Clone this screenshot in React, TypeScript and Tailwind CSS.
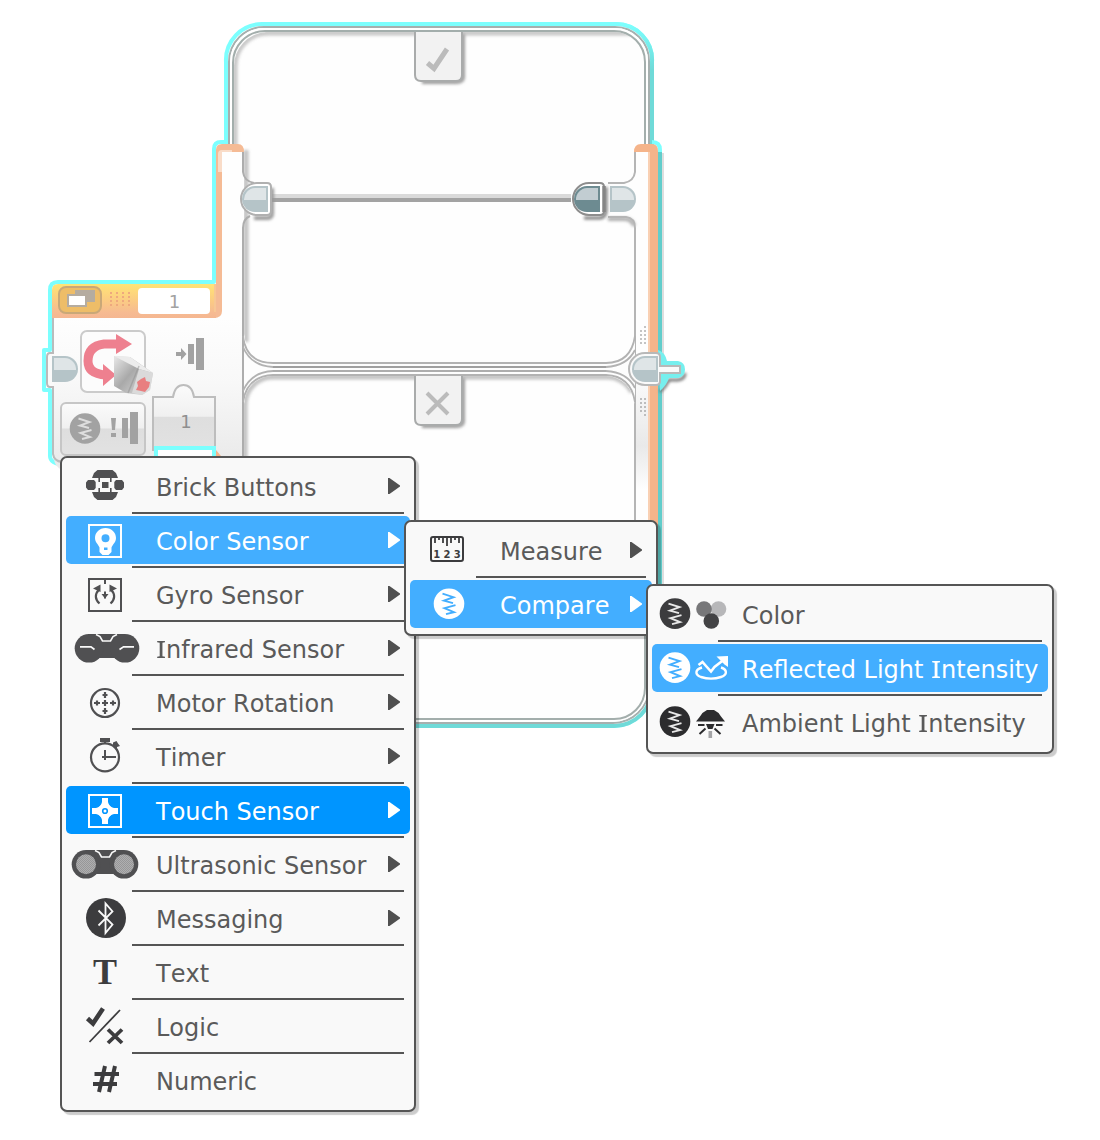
import React from "react";

type Tone = "none" | "light" | "strong";

interface Item {
  label: string;
  icon: React.ReactNode;
  arrow?: boolean;
  tone?: Tone;
}

const DARK = "#505052";
const INK = "#3c3c3e";

/* ---------- menu icons (each drawn in the icon column of a 48px row) ---------- */

function Cell({ children, w = 78 }: { children: React.ReactNode; w?: number }) {
  return (
    <svg width={w} height={48} viewBox={`0 0 ${w} 48`} className="block shrink-0" fill="none">
      {children}
    </svg>
  );
}

const BrickIcon = () => (
  <Cell>
    <path d="M31.500 8h15l3.500 3 2 5H26l2-5zM26 30h26l-2 5-3.500 3h-15L28 35z" fill={DARK} />
    <path d="M22 18h6l1.700 2v6L28 28h-6l-2-2.500v-5zM56 18h-6l-1.700 2v6l1.700 2h6l2-2.500v-5z" fill={DARK} />
    <path d="M36 20h6.500v6H36z" fill={DARK} />
    <path d="M33.200 15v5M33.200 26v5M44.800 15v5M44.800 26v5" stroke={DARK} strokeWidth="1.600" />
  </Cell>
);

const ColorSensorIcon = () => (
  <Cell>
    <rect x="23" y="9" width="32" height="32" stroke="#fff" strokeWidth="2" />
    <path
      fillRule="evenodd"
      fill="#fff"
      d="M39.500 12c6 0 10.500 4.500 10.500 10 0 4.500-3.500 6.500-4.500 9.500v4.500l-3 3h-6l-3-3v-4.500C32.500 28.500 29 26.500 29 22c0-5.500 4.500-10 10.500-10zM39.500 18.200a4 4 0 1 0 0 8 4 4 0 0 0 0-8zM38 31.500h3.500v2.500H38z"
    />
  </Cell>
);

const GyroIcon = () => (
  <Cell>
    <rect x="23" y="9" width="32" height="32" stroke={DARK} strokeWidth="2" />
    <path d="M39 9v5M39 21.500v7" stroke={DARK} strokeWidth="2" />
    <path d="M35.500 24h7L39 28.500z" fill={DARK} />
    <path d="M33.500 33.500c-4.500-4-5-9-.5-14M44.500 33.500c4.500-4 5-9 .5-14" stroke={DARK} strokeWidth="2.200" />
    <path d="M27 18.500l7.500-4V22zM51 18.500l-7.500-4V22z" fill={DARK} />
  </Cell>
);

const InfraredIcon = () => (
  <Cell>
    <path d="M22 10h37v22l-8 2H31l-9-2z" fill={DARK} />
    <circle cx="23" cy="24.300" r="14.300" fill={DARK} />
    <circle cx="59" cy="24.300" r="14.300" fill={DARK} />
    <path d="M30 10.500l4 2 2.500 4.500h8l2.500-4.500 4-2" stroke="#f9f9f9" strokeWidth="1.600" />
    <path d="M14 22.800h11l3.500 2.700M68 22.800H57.500L53.500 25.500" stroke="#f9f9f9" strokeWidth="1.700" />
  </Cell>
);

const MotorIcon = () => (
  <Cell>
    <circle cx="39" cy="25" r="14" stroke={DARK} strokeWidth="2.200" />
    <path
      d="M39 14v6M36.500 17h5M39 30v6M36.500 33h5M39 22v6M36 25h6M31 22.500v5M28 25h6M47 22.500v5M44 25h6"
      stroke={DARK}
      strokeWidth="2.200"
    />
  </Cell>
);

const TimerIcon = () => (
  <Cell>
    <circle cx="39" cy="25.300" r="14" stroke={DARK} strokeWidth="2.200" />
    <path d="M34 6h10v4H34zM47 10.500l3.500-1.500 1.500 2.500 2 2.500-3 1v3l-4-4z" fill={DARK} />
    <path d="M39 9v3M39 18v10M36 25h14" stroke={DARK} strokeWidth="2" />
  </Cell>
);

const TouchIcon = () => (
  <Cell>
    <rect x="23" y="9" width="32" height="32" stroke="#fff" strokeWidth="2" />
    <path d="M36 12h6v4q1 5 6 6h4v6h-4q-5 1-6 6v4h-6v-4q-1-5-6-6h-4v-6h4q5-1 6-6z" fill="#fff" />
    <path d="M32 18h14v14H32z" fill="#fff" transform="rotate(45 39 25)" />
    <circle cx="39" cy="25" r="2.300" stroke="#0095ff" strokeWidth="1.600" />
  </Cell>
);

const UltrasonicIcon = () => (
  <Cell>
    <defs>
      <pattern id="mesh" width="2" height="2" patternUnits="userSpaceOnUse">
        <rect width="2" height="2" fill="#afafb0" />
        <path d="M0 0h1v1H0zM1 1h1v1H1z" fill="#979798" />
      </pattern>
    </defs>
    <path d="M20 10h38v24H20z" fill={DARK} />
    <circle cx="20" cy="24.300" r="14.300" fill={DARK} />
    <circle cx="58" cy="24.300" r="14.300" fill={DARK} />
    <circle cx="20" cy="24.300" r="10" fill="url(#mesh)" />
    <circle cx="58" cy="24.300" r="10" fill="url(#mesh)" />
    <path d="M29 10.500l4 2 2.500 4.500h8l2.500-4.500 4-2" stroke="#f9f9f9" strokeWidth="1.600" />
  </Cell>
);

const BluetoothIcon = () => (
  <Cell>
    <circle cx="40" cy="24" r="20" fill={INK} />
    <path d="M32.500 16.500L46.500 30.500 39.500 39V9.500L46.500 17.500 32.500 31.500" stroke="#f9f9f9" strokeWidth="1.800" />
  </Cell>
);

const LetterIcon = () => (
  <span className="block w-[78px] shrink-0 text-center font-['Liberation_Serif',serif] text-[36px] leading-[48px] font-bold text-[#3c3c3e]">
    T
  </span>
);

const LogicIcon = () => (
  <Cell>
    <path d="M21.500 16.500l5.500 5L37 6.500" stroke={INK} strokeWidth="4.600" />
    <path d="M23.500 40L54 8" stroke={INK} strokeWidth="1.800" />
    <path d="M42 27.500l14 13.500M56 27.500L42 41" stroke={INK} strokeWidth="3.800" />
  </Cell>
);

const HashIcon = () => (
  <Cell>
    <path d="M28.500 18H53M27 28h24" stroke={INK} strokeWidth="4" />
    <path d="M39 10L33 36M49 10L43 36" stroke={INK} strokeWidth="4" />
  </Cell>
);

const MeasureIcon = () => (
  <Cell>
    <rect x="21" y="11" width="32" height="24" rx="2" stroke={INK} strokeWidth="2" />
    <path d="M25 11v6M29 11v3M33 11v6M37 11v9M41 11v6M45 11v3M49 11v6" stroke={INK} strokeWidth="1.800" />
    <text x="38.700" y="32" textAnchor="middle" fontFamily="DejaVu Sans" fontWeight="700" fontSize="10" letterSpacing="3.400" fill={INK}>
      123
    </text>
  </Cell>
);

function Badge({ x, y, disc, line }: { x: number; y: number; disc: string; line: string }) {
  return (
    <g transform={`translate(${x} ${y})`}>
      <circle r="15.300" fill={disc} />
      <path d="M-6.500-10L4.500-6.500-5-3 4-.5M6.500 1.500L-4.500 4.500 5 8.500-3 10.500" stroke={line} strokeWidth="1.900" fill="none" />
    </g>
  );
}

const CompareIcon = () => (
  <Cell>
    <Badge x={39} y={23.700} disc="#fff" line="#43aeff" />
  </Cell>
);

const CompareColorIcon = () => (
  <Cell w={89}>
    <Badge x={23} y={23.600} disc="#3c3c3e" line="#e8e8e8" />
    <circle cx="66.500" cy="19" r="7.800" fill="#b7b7b9" />
    <circle cx="52" cy="19" r="7.800" fill="#777779" />
    <circle cx="59.300" cy="31" r="7.800" fill="#434345" />
  </Cell>
);

const CompareReflectedIcon = () => (
  <Cell w={89}>
    <Badge x={23} y={23.600} disc="#fff" line="#43aeff" />
    <path
      d="M50 23.500c-7 2-7.500 7-1 9.500 6 2 14 2 20 0 7-2.500 6-7.500 0-9.500"
      stroke="#fff"
      strokeWidth="2.400"
    />
    <path d="M46.500 21l4-3 3.500 4 5 5.500 3.500-4.500L71.500 16" stroke="#fff" strokeWidth="2.600" />
    <path d="M64.500 12.500L76 12v11l-3.500-2.500-4.500-4.500z" fill="#fff" />
  </Cell>
);

const CompareAmbientIcon = () => (
  <Cell w={89}>
    <Badge x={23} y={23.600} disc="#2c2c2e" line="#e8e8e8" />
    <path d="M44 23.500l4-5q2.500-4.500 7-6.500h7q4.500 2 7 6.500l4 5z" fill="#2c2c2e" />
    <path d="M46 27h6.500M64 27h6.500M53.500 30.500l-6 5.500M62.500 30.500l6 5.500" stroke="#2c2c2e" strokeWidth="2" />
    <path d="M54 26h8.500l-2 5h-4.500z" fill="#2c2c2e" />
    <path d="M58.300 33v7" stroke="#a5a5a7" strokeWidth="3.600" />
  </Cell>
);

/* ---------- menus ---------- */

function Label({ text }: { text: string }) {
  return (
    <>
      {text.split(/(I)/).map((part, i) =>
        part === "I" ? (
          <span key={i} className="inline-block w-[10px] scale-x-125 text-center font-['Noto_Sans',sans-serif] leading-none">
            I
          </span>
        ) : (
          <React.Fragment key={i}>{part}</React.Fragment>
        ),
      )}
    </>
  );
}

const tones: Record<Tone, string> = {
  none: "text-[#5a5a5a]",
  light: "bg-[#43aeff] text-white",
  strong: "bg-[#0095ff] text-white",
};

function Menu({ items, place, gap }: { items: Item[]; place: string; gap: string }) {
  return (
    <ul
      className={`absolute rounded-[7px] border-2 border-[#555555] bg-[#f9f9f9] px-1 pt-1 pb-1.5 shadow-[3px_3px_1px_0px_rgba(0,0,0,0.2)] ${place}`}
    >
      {items.map((item, i) => (
        <li key={item.label}>
          {i > 0 && <div className="my-0.5 mr-1.5 ml-[66px] h-0.5 bg-[#555555]" />}
          <div className={`flex h-12 items-center rounded-[5px] ${tones[item.tone ?? "none"]}`}>
            {item.icon}
            <span
              className={`h-12 flex-1 pt-[2px] text-2xl leading-[48px] whitespace-nowrap [font-kerning:none] ${gap}`}
            >
              <Label text={item.label} />
            </span>
            {item.arrow && (
              <svg width="12" height="16" viewBox="0 0 12 16" className="mr-[10px] shrink-0 text-[#505050]">
                <path d="M0 0h1.500L12 7.500v1L1.500 16H0z" fill={item.tone ? "#ffffff" : "currentColor"} />
              </svg>
            )}
          </div>
        </li>
      ))}
    </ul>
  );
}

const sensors: Item[] = [
  { label: "Brick Buttons", icon: <BrickIcon />, arrow: true },
  { label: "Color Sensor", icon: <ColorSensorIcon />, arrow: true, tone: "light" },
  { label: "Gyro Sensor", icon: <GyroIcon />, arrow: true },
  { label: "Infrared Sensor", icon: <InfraredIcon />, arrow: true },
  { label: "Motor Rotation", icon: <MotorIcon />, arrow: true },
  { label: "Timer", icon: <TimerIcon />, arrow: true },
  { label: "Touch Sensor", icon: <TouchIcon />, arrow: true, tone: "strong" },
  { label: "Ultrasonic Sensor", icon: <UltrasonicIcon />, arrow: true },
  { label: "Messaging", icon: <BluetoothIcon />, arrow: true },
  { label: "Text", icon: <LetterIcon /> },
  { label: "Logic", icon: <LogicIcon /> },
  { label: "Numeric", icon: <HashIcon /> },
];

const modes: Item[] = [
  { label: "Measure", icon: <MeasureIcon />, arrow: true },
  { label: "Compare", icon: <CompareIcon />, arrow: true, tone: "light" },
];

const comparisons: Item[] = [
  { label: "Color", icon: <CompareColorIcon /> },
  { label: "Reflected Light Intensity", icon: <CompareReflectedIcon />, tone: "light" },
  { label: "Ambient Light Intensity", icon: <CompareAmbientIcon /> },
];

/* ---------- switch block drawing ---------- */

/* D-shaped sequence plug, 26x26, flat edge on the right. */
function Plug({ x, y, flip, top, bottom }: { x: number; y: number; flip?: boolean; top: string; bottom: string }) {
  return (
    <g transform={flip ? `translate(${x + 26} ${y}) scale(-1 1)` : `translate(${x} ${y})`}>
      <path d="M26 0H13A13 13 0 0 0 13 26H26z" fill={bottom} />
      <path d="M24 2H13A11.500 11.500 0 0 0 2 14H24z" fill={top} />
    </g>
  );
}

function Dots({ cols, rows, fill }: { cols: number[]; rows: number[]; fill: string }) {
  return (
    <g fill={fill}>
      {rows.map((y) => cols.map((x) => <rect key={`${x}-${y}`} x={x} y={y} width="2" height="2" />))}
    </g>
  );
}

function SwitchBlock() {
  const pane = "M228 170V62A34 34 0 0 1 262 26H616A34 34 0 0 1 650 62V688A36 36 0 0 1 614 724H264A36 36 0 0 1 228 688z";
  return (
    <svg width="1100" height="1140" viewBox="0 0 1100 1140" className="block" fill="none">
      <defs>
        <linearGradient id="head" x1="0" y1="284" x2="0" y2="318" gradientUnits="userSpaceOnUse">
          <stop offset="0" stopColor="#ffe477" />
          <stop offset="0.350" stopColor="#fdd27e" />
          <stop offset="0.850" stopColor="#f6ba92" />
          <stop offset="1" stopColor="#f5b791" />
        </linearGradient>
        <linearGradient id="body" x1="0" y1="318" x2="0" y2="462" gradientUnits="userSpaceOnUse">
          <stop offset="0" stopColor="#fefefe" />
          <stop offset="0.450" stopColor="#f8f8f8" />
          <stop offset="1" stopColor="#eaeaea" />
        </linearGradient>
        <linearGradient id="key" x1="0" y1="0" x2="0" y2="1">
          <stop offset="0" stopColor="#fbfbfb" />
          <stop offset="0.480" stopColor="#f0f0f0" />
          <stop offset="0.500" stopColor="#dedede" />
          <stop offset="1" stopColor="#e2e2e2" />
        </linearGradient>
        <linearGradient id="rail" x1="0" y1="380" x2="0" y2="490" gradientUnits="userSpaceOnUse">
          <stop offset="0" stopColor="#fafafa" />
          <stop offset="0.600" stopColor="#e9e9e9" />
          <stop offset="1" stopColor="#fefefe" />
        </linearGradient>
        <linearGradient id="rim" x1="0" y1="24" x2="0" y2="70" gradientUnits="userSpaceOnUse">
          <stop offset="0" stopColor="#7cfffe" />
          <stop offset="1" stopColor="#6fdad8" />
        </linearGradient>
        <linearGradient id="brick" x1="114" y1="360" x2="150" y2="390" gradientUnits="userSpaceOnUse">
          <stop offset="0" stopColor="#e2e2e2" />
          <stop offset="0.450" stopColor="#a9a9a9" />
          <stop offset="1" stopColor="#dcdcdc" />
        </linearGradient>
        <filter id="soft" filterUnits="userSpaceOnUse" x="0" y="0" width="720" height="760">
          <feGaussianBlur stdDeviation="1.700" />
        </filter>
        <clipPath id="upper">
          <path d="M244 150H234V66A34 34 0 0 1 266 32H614A30 30 0 0 1 644 62V144H634V336A28 28 0 0 1 606 362H272A30 28 0 0 1 244 334z" />
        </clipPath>
        <clipPath id="lower">
          <path d="M244 700V404A28 28 0 0 1 272 376H606A28 28 0 0 1 634 404V700z" />
        </clipPath>
      </defs>

      {/* glow and double frame around both branches */}
      <path d={pane} fill="#fefefe" stroke="#7cfffe" strokeWidth="8" />
      <path d="M616 26A34 34 0 0 1 650 62V688A36 36 0 0 1 614 724H264" stroke="url(#rim)" strokeWidth="8" />
      <path d={pane} fill="#fefefe" />
      <path d="M229 170V62A35 35 0 0 1 264 27H615A34 34 0 0 1 649 61V688A36 36 0 0 1 613 723H264" stroke="#a6b0af" strokeWidth="2" />
      <path d="M231 170V62A33 33 0 0 1 264 29H615A32 32 0 0 1 647 61V688A34 34 0 0 1 613 721H264" stroke="#fff" strokeWidth="2" />

      {/* inner shadows of the two panes */}
      <g clipPath="url(#upper)">
        <path d="M235 150V66A33 33 0 0 1 268 33H640" stroke="#b0b0b0" strokeWidth="5" filter="url(#soft)" opacity="0.700" />
        <path d="M246 150V342" stroke="#a8a8a8" strokeWidth="5" filter="url(#soft)" opacity="0.700" />
      </g>
      <g clipPath="url(#lower)">
        <path d="M245 700V404A28 28 0 0 1 272 377H606A28 28 0 0 1 632 392" stroke="#a8a8a8" strokeWidth="5" filter="url(#soft)" opacity="0.700" />
      </g>
      <path d="M233 150V64A32 32 0 0 1 265 31H614A31 31 0 0 1 645 62V688A31 31 0 0 1 614 719H264" stroke="#a3aeac" strokeWidth="2" />

      {/* body and its glow */}
      <path d="M216 144H242V456H218V318H216z" fill="#fefefe" />
      <path
        d="M66 465Q50 464 50 456V390H44V350H50V290Q50 282 58 282H214V149Q214 142 221 142H228"
        stroke="#7cfffe"
        strokeWidth="4"
        strokeLinejoin="round"
      />
      <path d="M52 318H242V470H62Q54 466 54 458z" fill="url(#body)" />
      <path d="M53 318V454Q54 461 62 462" stroke="#b9bcbc" strokeWidth="2" />

      {/* left rail */}
      <path d="M216 318V150Q216 144 222 144H238Q244 144 244 152H222V311Q222 318 214 318z" fill="#f5bb95" />
      <path d="M218 172V154Q218 150 222 150H232V152H222V172z" fill="#f9dcc8" />
      <path d="M243 152V172Q244 181 254 183M250 216Q243 219 243 228V456" stroke="#adadad" strokeWidth="2" />

      {/* right rail */}
      <path d="M652 142Q660 142 660 150V200" stroke="#7cfffe" strokeWidth="4" />
      <path d="M660 152V600" stroke="#62cdcb" strokeWidth="4" />
      <path d="M663 153V600" stroke="#dedede" strokeWidth="2" />
      <path d="M635 150H650V600H635z" fill="#fefefe" />
      <path d="M636 380H648V490H636z" fill="url(#rail)" />
      <path d="M634 152Q634 144 641 144H652Q658 144 658 151V600H650V152z" fill="#f5b48a" />
      <path d="M649 152V600" stroke="#f9d0b3" strokeWidth="2" />
      <path d="M608 219H624Q632 219 634 226" stroke="#b0b0b0" strokeWidth="4" filter="url(#soft)" />
      <path d="M635 152V172Q634 181 624 183H608M608 217H626Q635 218 635 228V590" stroke="#b5b5b5" strokeWidth="2" />

      {/* divider between the branches */}
      <path d="M244 334Q247 362 273 363H606Q632 361 635 336V404Q632 377 606 375H273Q246 377 244 404z" fill="#fdfdfd" />
      <path
        d="M243 336Q246 363 273 363H606Q631 363 635 336M243 347Q251 366 273 367H606Q627 366 635 350M243 391Q251 372 273 371H606Q627 372 635 388M243 402Q247 376 273 375H606Q631 376 635 402"
        stroke="#b2b2b2"
        strokeWidth="1.800"
      />
      <path d="M273 367H606" stroke="#9f9f9f" strokeWidth="2" />
      <path d="M273 371H606" stroke="#adadad" strokeWidth="2" />
      <Dots cols={[640, 644]} rows={[330, 334, 338, 342]} fill="#c4c4c4" />
      <Dots cols={[644]} rows={[326]} fill="#c4c4c4" />
      <Dots cols={[640, 644]} rows={[398, 402, 406, 410]} fill="#bdbdbd" />
      <Dots cols={[644]} rows={[414]} fill="#bdbdbd" />

      {/* wire and plugs of the upper branch */}
      <path d="M272 196H571" stroke="#dadada" strokeWidth="4" />
      <path d="M272 200H571" stroke="#a3a3a3" strokeWidth="4" />
      <path d="M272 188V213Q272 218 268 218H254" stroke="#999" strokeWidth="4" filter="url(#soft)" />
      <path d="M257 183H267Q271 183 271 187V211Q271 215 267 215H257A16 16 0 0 1 257 183z" fill="#fff" stroke="#b0b0b0" strokeWidth="2" />
      <Plug x={242} y={186} top="#dfe5e7" bottom="#b5c4c8" />
      <path d="M607 184h20v31h-20z" fill="#fdfdfd" />
      <path d="M584 218H600Q605 218 606 211V187" stroke="#777" strokeWidth="3" filter="url(#soft)" />
      <path d="M589 183H600Q604 183 604 187V211Q604 215 600 215H589A16 16 0 0 1 589 183z" fill="#fff" stroke="#8d8d8d" strokeWidth="2" />
      <path d="M604 186V212" stroke="#858585" strokeWidth="3.500" />
      <Plug x={574} y={186} top="#c2cdd2" bottom="#6d8b91" />
      <Plug x={610} y={186} flip top="#dfe5e7" bottom="#b5c4c8" />

      {/* branch tabs */}
      <path d="M463 34V77Q463 82 456 82H422" stroke="#9c9c9c" strokeWidth="4" filter="url(#soft)" />
      <path d="M415 32V75Q415 81 421 81H456Q462 81 462 75V32" fill="#f2f2f2" stroke="#a9abab" strokeWidth="2" />
      <path d="M427.500 63L434 68.500 447 49" stroke="#bbb" strokeWidth="5" />
      <path d="M463 378V421Q463 426 456 426H422" stroke="#9c9c9c" strokeWidth="4" filter="url(#soft)" />
      <path d="M415 376V419Q415 425 421 425H456Q462 425 462 419V376" fill="#f2f2f2" stroke="#a9abab" strokeWidth="2" />
      <path d="M427 393L448 414M448 393L427 414" stroke="#bbb" strokeWidth="4" />

      {/* exit plug */}
      <path d="M660 392Q666 386 669 380H678Q685 379 685 373" stroke="#777" strokeWidth="3" filter="url(#soft)" />
      <path d="M658 350Q665 352 667 361H678Q685 362 685 369.500T678 378H669Q666 386 660 391z" fill="#76efee" />
      <path d="M645 353H656Q660 353 660 357V366H680V373H660V381Q660 385 656 385H645A16 16 0 0 1 645 353z" fill="#fafafa" stroke="#b8b8b8" strokeWidth="2" />
      <Plug x={632} y={356} top="#dfe5e7" bottom="#b5c4c8" />

      {/* block header */}
      <path d="M52 318V290Q52 284 58 284H216V318z" fill="url(#head)" />
      <path d="M214 284h2v28h-2z" fill="#f7c795" />
      <rect x="59" y="287" width="42" height="26" rx="7" fill="#eebd68" stroke="#c9a878" strokeWidth="2" />
      <path d="M75 290H95V302H75z" fill="#b5aca0" />
      <path d="M68 295H86V306H68z" fill="#fff" stroke="#b5aca0" strokeWidth="2" />
      <Dots cols={[110, 116, 122, 128]} rows={[292, 296, 300, 304]} fill="#eea97e" />
      <rect x="138" y="288" width="72" height="26" rx="4" fill="#fff" />
      <text x="174.500" y="307.500" textAnchor="middle" fontFamily="DejaVu Sans" fontSize="18" fill="#a2a2a2">1</text>

      {/* entry plug */}
      <path d="M54 353H50Q47 353 47 357V383Q47 387 50 387H54" fill="#fafafa" stroke="#bcb9b9" strokeWidth="2" />
      <Plug x={52} y={356} flip top="#dfe5e7" bottom="#b5c4c8" />

      {/* block picture */}
      <rect x="81" y="331" width="64" height="61" rx="6" fill="#fcfcfc" stroke="#cbcbcb" strokeWidth="2" />
      <path d="M118 344H104Q88 346 88 361Q88 374 106 375" stroke="#ee808f" strokeWidth="9" />
      <path d="M116 334L132 344 116 354zM103 364L116 375 103 386z" fill="#ee808f" />
      <path d="M114 356L130 357 153 373 150 390 142 395 126 393 114 386z" fill="url(#brick)" />
      <path d="M114 356L130 357 153 373 139 369z" fill="#ececec" />
      <path d="M139 369L132 393 142 395 150 390 153 373z" fill="#dadada" />
      <path d="M139 366L128 393" stroke="#8f8f8f" strokeWidth="1.500" opacity="0.500" />
      <path d="M141 379l4-2 1 4 4 1-1 5-4 5-4-1-5-1 2-4-1-4z" fill="#e87f80" />

      {/* port symbol */}
      <path d="M196 338H204V370H196zM188 344H194V364H188zM176 352H181V348L186.500 354 181 360V356H176z" fill="#a2a2a2" />

      {/* mode selector key */}
      <rect x="61" y="403" width="84" height="52" rx="5" fill="url(#key)" stroke="#c6c6c6" strokeWidth="2" />
      <Badge x={85} y={428.500} disc="#a2a2a2" line="#dedede" />
      <path d="M130 412H138V444H130zM122 418H128V438H122zM111 418H116L115 430H112zM111 433H116V437H111z" fill="#a2a2a2" />

      {/* parameter slot */}
      <path d="M153 450V397H173Q175 385 183.500 385T194 397H215V450z" fill="url(#key)" stroke="#bdbdbd" strokeWidth="2" />
      <text x="186" y="428" textAnchor="middle" fontFamily="DejaVu Sans" fontSize="18" fill="#8f8f8f">1</text>
      <path d="M154 446H216V470H154z" fill="#7cfffe" />
      <path d="M158 450H212V470H158z" fill="#fefefe" />
      <path d="M216 450L221 456H216z" fill="#f5b48a" />
    </svg>
  );
}

export default function App() {
  return (
    <main className="relative h-[1140px] w-[1100px] overflow-hidden bg-white font-['DejaVu_Sans',Verdana,sans-serif]">
      <SwitchBlock />
      <Menu items={sensors} place="top-[456px] left-[60px] w-[356px]" gap="ml-3" />
      <Menu items={modes} place="top-[520px] left-[404px] w-[254px]" gap="ml-3" />
      <Menu items={comparisons} place="top-[584px] left-[646px] w-[408px]" gap="ml-px" />
    </main>
  );
}
